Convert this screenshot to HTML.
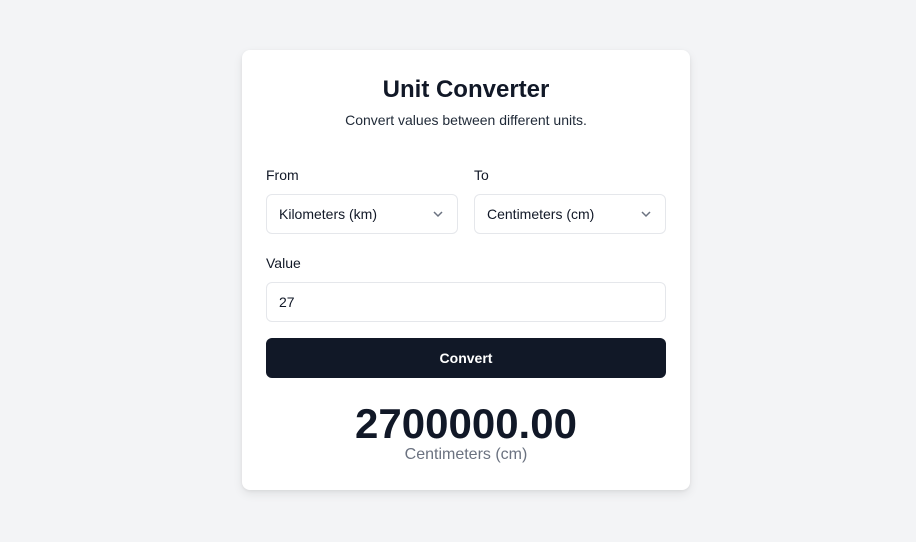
<!DOCTYPE html>
<html><head><style>
*{box-sizing:border-box;margin:0;padding:0}
body{width:916px;height:542px;background:#f3f4f6;font-family:"Liberation Sans",sans-serif;position:relative;color:#111827}
.card{position:absolute;left:242px;top:50px;width:448px;height:440px;background:#fff;border-radius:8px;box-shadow:0 4px 10px rgba(0,0,0,0.08),0 1px 3px rgba(0,0,0,0.06)}
.abs{position:absolute}
h1{position:absolute;left:242px;width:448px;top:76px;text-align:center;font-size:24px;font-weight:bold}
.sub{position:absolute;left:242px;top:112px;width:448px;text-align:center;font-size:14px;color:#1f2937}
.lbl{font-size:14px;color:#111827}
.box{position:absolute;height:40px;border:1px solid #e5e7eb;border-radius:6px;background:#fff;font-size:14px;padding:0 12px;line-height:38px}
.chev{position:absolute;right:14px;top:15px}
.btn{position:absolute;left:266px;top:338px;width:400px;height:40px;background:#111827;border-radius:6px;color:#fff;text-align:center;line-height:40px;font-size:14px;font-weight:bold}
.res{position:absolute;left:242px;width:448px;top:400px;text-align:center;font-size:42px;font-weight:bold}
.unit{position:absolute;left:242px;width:448px;top:446px;text-align:center;font-size:16px;color:#6b7280}
</style></head><body>
<div class="card"></div>
<h1>Unit Converter</h1>
<div class="sub">Convert values between different units.</div>
<div class="abs lbl" style="left:266px;top:167px">From</div>
<div class="abs lbl" style="left:474px;top:167px">To</div>
<div class="box" style="left:266px;top:194px;width:192px">Kilometers (km)<svg class="chev" width="10" height="8" viewBox="0 0 10 8"><path d="M1 2l4 4 4-4" fill="none" stroke="#6b7280" stroke-width="1.5"/></svg></div>
<div class="box" style="left:474px;top:194px;width:192px">Centimeters (cm)<svg class="chev" width="10" height="8" viewBox="0 0 10 8"><path d="M1 2l4 4 4-4" fill="none" stroke="#6b7280" stroke-width="1.5"/></svg></div>
<div class="abs lbl" style="left:266px;top:255px">Value</div>
<div class="box" style="left:266px;top:282px;width:400px">27</div>
<div class="btn">Convert</div>
<div class="res">2700000.00</div>
<div class="unit">Centimeters (cm)</div>
</body></html>
